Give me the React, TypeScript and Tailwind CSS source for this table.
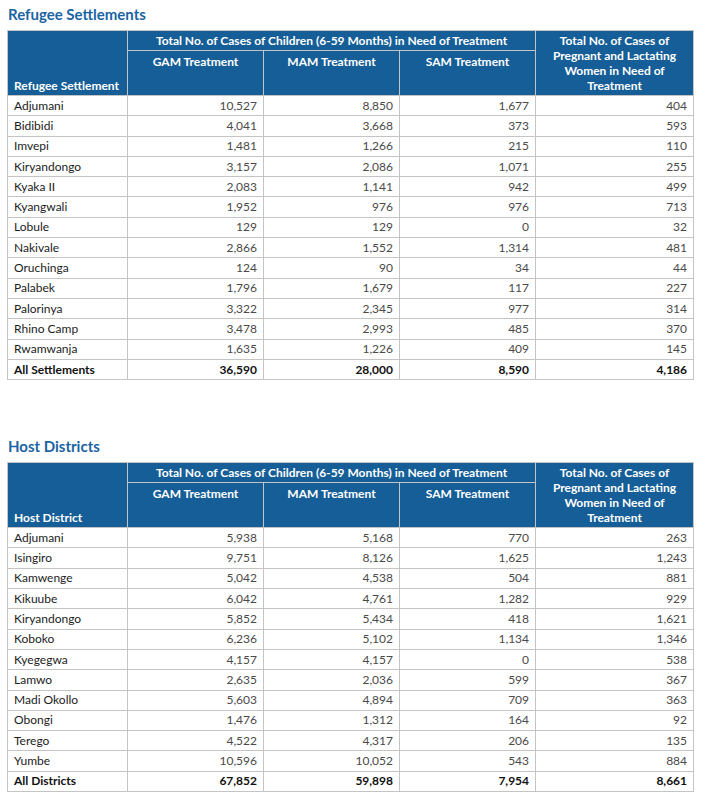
import React from "react"

type Row = [string, string, string, string, string]

const settlements: Row[] = [
  ["Adjumani", "10,527", "8,850", "1,677", "404"],
  ["Bidibidi", "4,041", "3,668", "373", "593"],
  ["Imvepi", "1,481", "1,266", "215", "110"],
  ["Kiryandongo", "3,157", "2,086", "1,071", "255"],
  ["Kyaka II", "2,083", "1,141", "942", "499"],
  ["Kyangwali", "1,952", "976", "976", "713"],
  ["Lobule", "129", "129", "0", "32"],
  ["Nakivale", "2,866", "1,552", "1,314", "481"],
  ["Oruchinga", "124", "90", "34", "44"],
  ["Palabek", "1,796", "1,679", "117", "227"],
  ["Palorinya", "3,322", "2,345", "977", "314"],
  ["Rhino Camp", "3,478", "2,993", "485", "370"],
  ["Rwamwanja", "1,635", "1,226", "409", "145"],
]

const districts: Row[] = [
  ["Adjumani", "5,938", "5,168", "770", "263"],
  ["Isingiro", "9,751", "8,126", "1,625", "1,243"],
  ["Kamwenge", "5,042", "4,538", "504", "881"],
  ["Kikuube", "6,042", "4,761", "1,282", "929"],
  ["Kiryandongo", "5,852", "5,434", "418", "1,621"],
  ["Koboko", "6,236", "5,102", "1,134", "1,346"],
  ["Kyegegwa", "4,157", "4,157", "0", "538"],
  ["Lamwo", "2,635", "2,036", "599", "367"],
  ["Madi Okollo", "5,603", "4,894", "709", "363"],
  ["Obongi", "1,476", "1,312", "164", "92"],
  ["Terego", "4,522", "4,317", "206", "135"],
  ["Yumbe", "10,596", "10,052", "543", "884"],
]

function DataTable({
  title,
  firstHeader,
  rows,
  total,
}: {
  title: string
  firstHeader: string
  rows: Row[]
  total: Row
}) {
  return (
    <section>
      <h2 className="pl-[8px] h-[30px] pt-[4px] text-[15px] font-bold text-[#1b64a3] leading-[20px]">
        {title}
      </h2>
      <table className="ml-[7px] w-[686px] table-fixed border-collapse text-[12px] leading-[14px]">
        <colgroup>
          <col className="w-[120px]" />
          <col className="w-[136px]" />
          <col className="w-[136px]" />
          <col className="w-[136px]" />
          <col className="w-[158px]" />
        </colgroup>
        <thead className="bg-[#155e97] text-white font-bold">
          <tr className="h-[20px]">
            <th
              rowSpan={2}
              className="border border-[#c4c4c4] px-[6px] pb-[2px] text-left align-bottom"
            >
              {firstHeader}
            </th>
            <th colSpan={3} className="border border-[#c4c4c4] px-[6px] text-center align-middle">
              Total No. of Cases of Children (6-59 Months) in Need of Treatment
            </th>
            <th
              rowSpan={2}
              className="border border-[#c4c4c4] px-[10px] text-center align-middle leading-[15px]"
            >
              Total No. of Cases of Pregnant and Lactating Women in Need of Treatment
            </th>
          </tr>
          <tr className="h-[45px]">
            {["GAM Treatment", "MAM Treatment", "SAM Treatment"].map((h) => (
              <th key={h} className="border border-[#c4c4c4] pt-[4px] text-center align-top">
                {h}
              </th>
            ))}
          </tr>
        </thead>
        <tbody>
          {rows.map((r) => (
            <tr key={r[0]} className="h-[20.3px]">
              <td className="border border-[#c4c4c4] px-[6px] text-[#1c1c1c]">{r[0]}</td>
              {r.slice(1).map((v, i) => (
                <td key={i} className="border border-[#c4c4c4] px-[6px] text-right text-[#4a4a4a]">
                  {v}
                </td>
              ))}
            </tr>
          ))}
          <tr className="h-[20.3px] font-bold text-[#111]">
            <td className="border border-[#c4c4c4] px-[6px]">{total[0]}</td>
            {total.slice(1).map((v, i) => (
              <td key={i} className="border border-[#c4c4c4] px-[6px] text-right">
                {v}
              </td>
            ))}
          </tr>
        </tbody>
      </table>
    </section>
  )
}

export default function App() {
  return (
    <div
      className="w-[706px] h-[796px] bg-white overflow-hidden"
      style={{ fontFamily: "Lato, 'Open Sans', sans-serif" }}
    >
      <DataTable
        title="Refugee Settlements"
        firstHeader="Refugee Settlement"
        rows={settlements}
        total={["All Settlements", "36,590", "28,000", "8,590", "4,186"]}
      />
      <div className="h-[52px]" />
      <DataTable
        title="Host Districts"
        firstHeader="Host District"
        rows={districts}
        total={["All Districts", "67,852", "59,898", "7,954", "8,661"]}
      />
    </div>
  )
}
